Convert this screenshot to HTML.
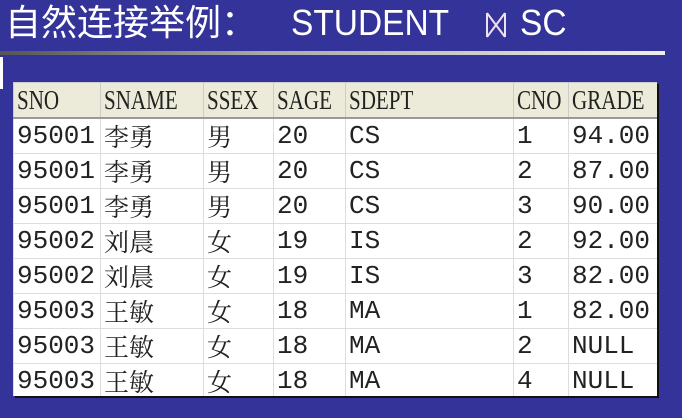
<!DOCTYPE html>
<html><head><meta charset="utf-8"><style>
body{margin:0;width:682px;height:418px;background:#333399;position:relative;overflow:hidden}
.title{position:absolute;left:5px;top:0px;color:#fff;font:36px/46px "Liberation Sans","Noto Sans CJK SC",sans-serif;white-space:nowrap}
.e{position:absolute;top:0;color:#fff;font:36px/46px "Liberation Sans",sans-serif;white-space:nowrap;display:inline-block;transform:scaleX(.93);transform-origin:left}
.bow{position:absolute;left:486px;top:12px}
.line{position:absolute;left:0;top:51px;width:665px;height:4px;background:linear-gradient(90deg,#555 0%,#aaa 40%,#eee 100%)}
.bar{position:absolute;left:0;top:57px;width:3px;height:32px;background:#fff}
.tbl{position:absolute;left:13px;top:82px;width:644px;height:314px;background:#fff;box-shadow:2px 2px 0 #111;overflow:hidden}
table{border-collapse:collapse;width:644px;table-layout:fixed}
td{border:1px solid #ddd;padding:0 0 0 3px;height:34px;line-height:34px;font:26px/34px "Liberation Mono","Noto Serif CJK SC",serif;color:#222;white-space:nowrap;overflow:hidden;vertical-align:middle;box-sizing:border-box}
tr.h td{background:#ecead9;font:27px/34px "Liberation Serif",serif;border-color:#ccc;border-bottom:2px solid #999}
tr.h td span{display:inline-block;transform:scaleX(.78);transform-origin:left}
.c{font:25px/32px "Noto Serif CJK SC",serif}
</style></head><body>
<div class="title">自然连接举例：</div>
<div class="e" style="left:291px">STUDENT</div>
<svg class="bow" width="20" height="26" viewBox="0 0 20 26"><path d="M1 1V25M19 1V25M1 1L19 25M19 1L1 25" stroke="#f0e0f0" stroke-width="2" fill="none"/></svg>
<div class="e" style="left:520px">SC</div>
<div class="line"></div><div class="bar"></div>
<div class="tbl"><table>
<colgroup><col style="width:87px"><col style="width:103px"><col style="width:70px"><col style="width:72px"><col style="width:168px"><col style="width:55px"><col style="width:89px"></colgroup>
<tr class="h"><td><span>SNO</span></td><td><span>SNAME</span></td><td><span>SSEX</span></td><td><span>SAGE</span></td><td><span>SDEPT</span></td><td><span>CNO</span></td><td><span>GRADE</span></td></tr>
<tr><td>95001</td><td class="c">李勇</td><td class="c">男</td><td>20</td><td>CS</td><td>1</td><td>94.00</td></tr>
<tr><td>95001</td><td class="c">李勇</td><td class="c">男</td><td>20</td><td>CS</td><td>2</td><td>87.00</td></tr>
<tr><td>95001</td><td class="c">李勇</td><td class="c">男</td><td>20</td><td>CS</td><td>3</td><td>90.00</td></tr>
<tr><td>95002</td><td class="c">刘晨</td><td class="c">女</td><td>19</td><td>IS</td><td>2</td><td>92.00</td></tr>
<tr><td>95002</td><td class="c">刘晨</td><td class="c">女</td><td>19</td><td>IS</td><td>3</td><td>82.00</td></tr>
<tr><td>95003</td><td class="c">王敏</td><td class="c">女</td><td>18</td><td>MA</td><td>1</td><td>82.00</td></tr>
<tr><td>95003</td><td class="c">王敏</td><td class="c">女</td><td>18</td><td>MA</td><td>2</td><td>NULL</td></tr>
<tr><td>95003</td><td class="c">王敏</td><td class="c">女</td><td>18</td><td>MA</td><td>4</td><td>NULL</td></tr>
</table></div>
</body></html>
